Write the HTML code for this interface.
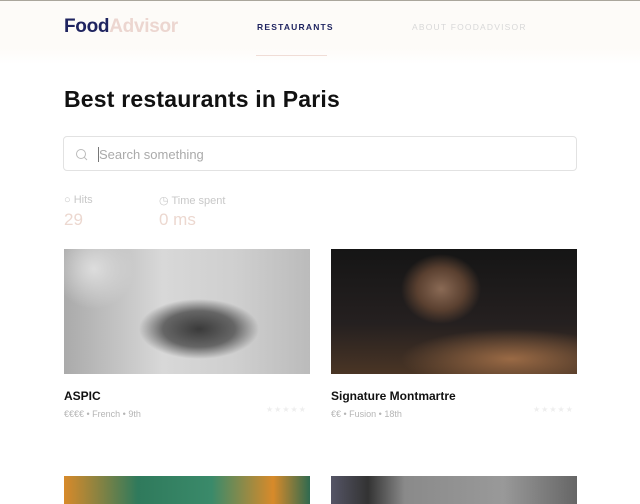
<!DOCTYPE html>
<html><head><meta charset="utf-8"><style>
*{margin:0;padding:0;box-sizing:border-box}
body{width:640px;height:504px;overflow:hidden;background:#fff;font-family:"Liberation Sans",sans-serif;position:relative}
.hdr{position:absolute;left:0;top:0;width:640px;height:64px;background:linear-gradient(#fdfbf8 75%,#fff);border-top:1px solid #aaa69c}
.logo{position:absolute;left:64px;top:16px;font-size:19px;font-weight:bold;color:#1f2460;letter-spacing:-0.3px}
.logo span{color:#ecd6d0}
.nav{position:absolute;top:22px;font-size:8.5px;letter-spacing:1.2px;font-weight:bold}
.ul{position:absolute;left:256px;top:55px;width:71px;height:1px;background:#f0ddd6}
h1{position:absolute;left:64px;top:86px;font-size:23px;color:#111;font-weight:bold;letter-spacing:0.2px}
.search{position:absolute;left:63px;top:136px;width:514px;height:35px;border:1px solid #e2e2e2;border-radius:4px;background:#fff}
.search .ph{position:absolute;left:35px;top:10px;font-size:13px;color:#aaa}
.search .cur{position:absolute;left:34px;top:10px;width:1px;height:15px;background:#777}
.lbl{position:absolute;top:194px;font-size:11px;color:#c8c8c8}
.val{position:absolute;top:210px;font-size:17px;color:#ecd8d0}
.img{position:absolute;width:246px;height:125px;top:249px}
.name{position:absolute;top:389px;font-size:12px;font-weight:bold;color:#111}
.meta{position:absolute;top:409px;font-size:9px;color:#b5b5b5}
.stars{position:absolute;top:405px;font-size:8px;color:#eee;letter-spacing:1px}
</style></head><body>
<div class="hdr"></div>
<div class="logo">Food<span>Advisor</span></div>
<div class="nav" style="left:257px;color:#1f2460">RESTAURANTS</div>
<div class="nav" style="left:412px;color:#d8d8d8;font-weight:normal">ABOUT FOODADVISOR</div>
<div class="ul"></div>
<h1>Best restaurants in Paris</h1>
<div class="search">
<svg style="position:absolute;left:11px;top:11px" width="13" height="13" viewBox="0 0 13 13"><circle cx="6" cy="6" r="4.5" fill="none" stroke="#bbb" stroke-width="1"/><line x1="9.3" y1="9.3" x2="12" y2="12" stroke="#bbb"/></svg>
<div class="cur"></div><div class="ph">Search something</div></div>
<div class="lbl" style="left:64px">○ Hits</div>
<div class="val" style="left:64px">29</div>
<div class="lbl" style="left:159px">◷ Time spent</div>
<div class="val" style="left:159px">0 ms</div>
<div class="img" style="left:64px;background:radial-gradient(ellipse 60px 30px at 135px 80px,#3a3a3a,#666 60%,transparent 100%),radial-gradient(ellipse 40px 40px at 30px 20px,#ddd,transparent),linear-gradient(90deg,#aaa,#d8d8d8 40%,#cfcfcf 70%,#bbb);"></div>
<div class="img" style="left:331px;background:radial-gradient(ellipse 40px 35px at 110px 40px,#8a6a55,#5a4030 60%,transparent 100%),radial-gradient(ellipse 110px 30px at 180px 110px,#9a6a45,transparent),linear-gradient(#151515,#252020 60%,#4a3525);"></div>
<div class="name" style="left:64px">ASPIC</div>
<div class="meta" style="left:64px">€€€€ • French • 9th</div>
<div class="stars" style="left:266px">★★★★★</div>
<div class="name" style="left:331px">Signature Montmartre</div>
<div class="meta" style="left:331px">€€ • Fusion • 18th</div>
<div class="stars" style="left:533px">★★★★★</div>
<div class="img" style="left:64px;top:476px;height:28px;background:linear-gradient(90deg,#d88a2a,#2f7a5c 30%,#3a8a6a 60%,#d88a2a 85%,#2f6a50)"></div>
<div class="img" style="left:331px;top:476px;height:28px;background:linear-gradient(90deg,#556,#333 15%,#8a8a8a 30%,#999 70%,#666)"></div>
</body></html>
